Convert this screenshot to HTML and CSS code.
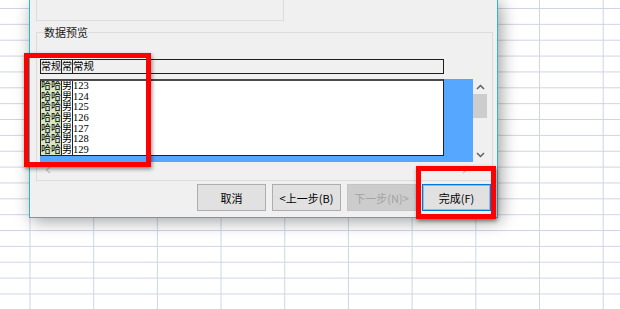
FILE: index.html
```html
<!DOCTYPE html>
<html lang="zh-CN">

<head>
    <meta charset="UTF-8">
    <meta name="viewport" content="width=device-width, initial-scale=1.0">
    <title>文本导入向导</title>
    <link rel="stylesheet" href="styles.css">
</head>

<body>
    <div class="dialog">
        <div class="top-box"></div>

        <div class="group">
            <div class="legend">数据预览</div>

            <div class="head">
                <span class="c1">常规</span>
                <span class="c2">常</span>
                <span class="c3">常规</span>
            </div>

            <div class="preview">
                <div class="blue">
                    <div class="data">
                        <div class="row"><span class="c1 green">哈哈</span><span class="c2">男</span><span class="c3">123</span></div>
                        <div class="row"><span class="c1 green">哈哈</span><span class="c2">男</span><span class="c3">124</span></div>
                        <div class="row"><span class="c1 green">哈哈</span><span class="c2">男</span><span class="c3">125</span></div>
                        <div class="row"><span class="c1 green">哈哈</span><span class="c2">男</span><span class="c3">126</span></div>
                        <div class="row"><span class="c1 green">哈哈</span><span class="c2">男</span><span class="c3">127</span></div>
                        <div class="row"><span class="c1 green">哈哈</span><span class="c2">男</span><span class="c3">128</span></div>
                        <div class="row"><span class="c1 green">哈哈</span><span class="c2">男</span><span class="c3">129</span></div>
                    </div>
                </div>
                <div class="vscroll">
                    <div class="arrow">
                        <svg width="9" height="6" viewBox="0 0 9 6"><polyline points="1,5 4.5,1.5 8,5" fill="none" stroke="#606060" stroke-width="1.5"/></svg>
                    </div>
                    <div class="thumb"></div>
                    <div class="track"></div>
                    <div class="arrow">
                        <svg width="9" height="6" viewBox="0 0 9 6"><polyline points="1,1 4.5,4.5 8,1" fill="none" stroke="#606060" stroke-width="1.5"/></svg>
                    </div>
                </div>
            </div>

            <div class="hscroll">
                <svg width="6" height="8" viewBox="0 0 6 8"><polyline points="5,1 1.5,4 5,7" fill="none" stroke="#c4c4c4" stroke-width="1.3"/></svg>
                <svg width="6" height="8" viewBox="0 0 6 8"><polyline points="1,1 4.5,4 1,7" fill="none" stroke="#c4c4c4" stroke-width="1.3"/></svg>
            </div>
        </div>

        <div class="buttons">
            <button type="button" class="btn">取消</button>
            <button type="button" class="btn">&lt;上一步(B)</button>
            <button type="button" class="btn disabled">下一步(N)&gt;</button>
            <button type="button" class="btn default">完成(F)</button>
        </div>
    </div>

    <!-- 标注框 -->
    <div class="mark mark-preview"></div>
    <div class="mark mark-finish"></div>
</body>

</html>
```

FILE: styles.css
```css
body {
    margin: 0;
    width: 620px;
    height: 309px;
    overflow: hidden;
    position: relative;
    background-color: #fff;
    background-image:
        linear-gradient(to right, #cfd5e3 1px, transparent 1px),
        linear-gradient(to bottom, #cfd5e3 1px, transparent 1px);
    background-size: 63.7px 15.87px;
    background-position: 29.5px 8px;
}

.dialog {
    position: absolute;
    left: 29px;
    top: 0;
    width: 469px;
    height: 218px;
    box-sizing: border-box;
    padding: 0 5px 0 6px;
    background: #f0f0f0;
    border: 1px solid #2fb5c4;
    border-top: none;
    box-shadow: 3px 3px 16px rgba(0, 0, 0, 0.38);
    font-family: "Noto Sans CJK SC", sans-serif;
    color: #000;
}

.top-box {
    width: 248px;
    height: 21px;
    box-sizing: border-box;
    border: 1px solid #dcdcdc;
    border-top: none;
}

.group {
    margin-top: 11px;
    width: 457px;
    height: 149px;
    box-sizing: border-box;
    padding-left: 3px;
    border: 1px solid #dcdcdc;
}

.legend {
    width: fit-content;
    margin: -7px 0 0 4px;
    font-size: 11px;
    line-height: 12px;
    background: #f0f0f0;
    color: #1a1a1a;
}

.head,
.row {
    display: flex;
    font-family: "Liberation Serif", "Noto Sans CJK SC", serif;
    font-size: 10.5px;
}

.head {
    margin-top: 21px;
    width: 404px;
    height: 15px;
    box-sizing: border-box;
    border: 1px solid #1e1e1e;
    line-height: 13px;
}

.c1 {
    width: 21px;
    box-sizing: border-box;
    border-right: 1px solid #222;
    white-space: nowrap;
    font-size: 10px;
}

.c2 {
    width: 11px;
    box-sizing: border-box;
    border-right: 1px solid #222;
    font-size: 10px;
}

.c3 {
    flex: 1;
}

.green {
    background: #d7e6c4;
}

.preview {
    margin-top: 5px;
    display: flex;
    height: 83px;
}

.blue {
    width: 433px;
    background: #55a7ff;
}

.data {
    width: 404px;
    height: 77px;
    box-sizing: border-box;
    overflow: hidden;
    background: #fff;
    border: 1px solid #222;
    border-top: 2px solid #4a4a4a;
}

.row {
    height: 10.67px;
    line-height: 10.67px;
}

.vscroll {
    width: 14px;
    display: flex;
    flex-direction: column;
}

.arrow {
    height: 15px;
    display: flex;
    align-items: center;
    justify-content: center;
}

.arrow svg {
    display: block;
}

.thumb {
    height: 24px;
    background: #cdcdcd;
}

.track {
    flex: 1;
}

.hscroll {
    width: 433px;
    height: 16px;
    box-sizing: border-box;
    padding: 0 5px;
    display: flex;
    align-items: center;
    justify-content: space-between;
}

.buttons {
    display: flex;
    gap: 6px;
    margin-top: 3px;
    padding-left: 161px;
}

.btn {
    width: 69px;
    height: 27px;
    box-sizing: border-box;
    padding: 0;
    display: flex;
    align-items: center;
    justify-content: center;
    border: 1px solid #adadad;
    background: #e1e1e1;
    font-family: "Noto Sans CJK SC", sans-serif;
    font-size: 11px;
    color: #000;
}

.btn.disabled {
    background: #cccccc;
    border-color: #c4c4c4;
    color: #a3a3a3;
}

.btn.default {
    border-color: #0078d7;
    box-shadow: inset 0 0 0 1px rgba(0, 120, 215, 0.35);
}

.mark {
    position: absolute;
    box-sizing: border-box;
    border: 5px solid #f00;
    box-shadow: 1px 2px 4px rgba(0, 0, 0, 0.45);
}

.mark-preview {
    left: 24px;
    top: 53px;
    width: 127px;
    height: 114px;
}

.mark-finish {
    left: 416px;
    top: 166px;
    width: 80px;
    height: 53px;
}
```
